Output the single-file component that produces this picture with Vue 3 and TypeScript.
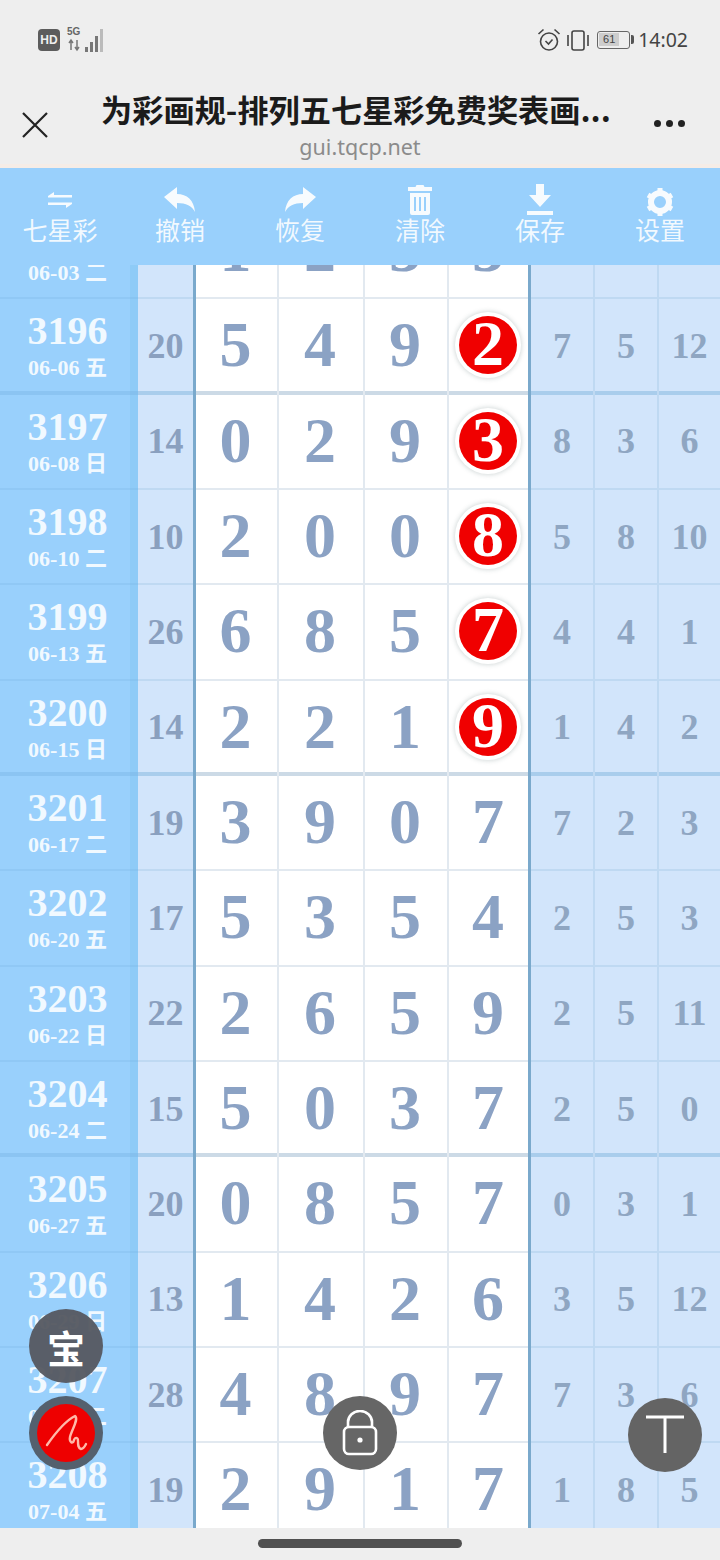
<template>
  <div class="screen">
    <div class="status">
      <div class="status__left">
        <span class="hd">HD</span>
        <div class="net">
          <span class="net__g">5G</span>
          <svg width="40" height="24" viewBox="0 0 40 24">
            <path d="M5 12v10M3 15l2-3 2 3M11 22V12M9 19l2 3 2-3" fill="none" stroke="#777" stroke-width="1.5" />
            <rect x="19" y="19" width="3" height="5" fill="#777" />
            <rect x="24" y="14" width="3" height="10" fill="#777" />
            <rect x="29" y="8" width="3" height="16" fill="#777" />
            <rect x="34" y="1" width="3" height="23" fill="#bbb" />
          </svg>
        </div>
      </div>
      <div class="status__right">
        <svg width="24" height="24" viewBox="0 0 24 24" fill="none" stroke="#444" stroke-width="1.6">
          <circle cx="12" cy="13.5" r="8.5" />
          <path d="M8.5 13l3 3 4-4.5M1.5 6l5-4.5M22.5 6l-5-4.5" />
        </svg>
        <svg width="26" height="24" viewBox="0 0 26 24" fill="none" stroke="#444" stroke-width="1.6">
          <rect x="7" y="3" width="12" height="19" rx="2" />
          <path d="M3 7v11M23 7v11" />
        </svg>
        <div class="batt"><span class="batt__fill">61</span></div>
        <span class="time">14:02</span>
      </div>
    </div>

    <header class="head">
      <svg class="head__close" width="28" height="28" viewBox="0 0 28 28">
        <path d="M2 2l24 24M26 2L2 26" stroke="#222" stroke-width="2.2" fill="none" />
      </svg>
      <div class="head__mid">
        <div class="head__title">为彩画规-排列五七星彩免费奖表画...</div>
        <div class="head__url">gui.tqcp.net</div>
      </div>
      <div class="head__more"><i></i><i></i><i></i></div>
    </header>

    <nav class="tools">
      <div class="tool">
        <svg viewBox="0 0 32 32" width="32" height="32" fill="#fff">
          <path d="M4 12l6-4v3h18v2.4H4zM28 20l-6 4v-3H4v-2.4h24z" />
        </svg>
        <span>七星彩</span>
      </div>
      <div class="tool">
        <svg viewBox="0 0 32 32" width="32" height="32" fill="#fff">
          <path d="M0 13L13 3v7c10 0 17 6 18 18-3-6-9-9-18-9v6z" />
        </svg>
        <span>撤销</span>
      </div>
      <div class="tool">
        <svg viewBox="0 0 32 32" width="32" height="32" fill="#fff">
          <path d="M32 13L19 3v7C9 10 2 16 1 28c3-6 9-9 18-9v6z" />
        </svg>
        <span>恢复</span>
      </div>
      <div class="tool">
        <svg viewBox="0 0 32 32" width="32" height="32" fill="#fff">
          <path fill-rule="evenodd" d="M12.5 1h7l1 2H28v4H4V3h7.5zM6 9h20v20a2 2 0 0 1-2 2H8a2 2 0 0 1-2-2zm4 4v14h2V13zm5 0v14h2V13zm5 0v14h2V13z" />
        </svg>
        <span>清除</span>
      </div>
      <div class="tool">
        <svg viewBox="0 0 32 32" width="32" height="32" fill="#fff">
          <path d="M12 0h8v11h7L16 23 5 11h7zM3 27h26v4H3z" />
        </svg>
        <span>保存</span>
      </div>
      <div class="tool">
        <svg viewBox="0 0 32 32" width="32" height="32">
          <circle cx="16" cy="18" r="9" fill="none" stroke="#fff" stroke-width="6" />
          <path d="M16 18v-14M16 18v14M16 18l12-7M16 18L4 25M16 18l12 7M16 18L4 11" stroke="#fff" stroke-width="5" stroke-dasharray="0 10 5" fill="none" />
        </svg>
        <span>设置</span>
      </div>
    </nav>

    <main class="table">
      <div class="rows">
        <div v-for="(r, i) in rows" :key="i" :class="['row', i % 4 === 1 && 'row--thick']">
          <div class="c-no">
            <div class="c-no__num">{{ r.no }}</div>
            <div class="c-no__date">{{ r.date }}</div>
          </div>
          <div class="c-sum">{{ r.sum }}</div>
          <div class="c-main">
            <div v-for="(d, j) in r.main" :key="j" class="cell">
              <span v-if="j === 3 && r.hit" class="ball">{{ d }}</span>
              <template v-else>{{ d }}</template>
            </div>
          </div>
          <div class="c-side">
            <div v-for="(d, j) in r.side" :key="j" class="cell">{{ d }}</div>
          </div>
        </div>
      </div>
    </main>

    <div class="home"><i></i></div>

    <div class="fab fab--bao">宝</div>
    <div class="fab fab--sign">
      <div class="sign">
        <svg width="58" height="58" viewBox="0 0 58 58" fill="none">
          <path d="M10 41C17 31 28 17 38 12c4 3-3 13-5 21-1 5 3 8 4 3 1-3 4-3 4 1 0 4 0 7 3 8 2 0 4-3 5-5" stroke="#ffb8a8" stroke-width="2.4" stroke-linecap="round" stroke-linejoin="round" />
        </svg>
      </div>
    </div>
    <div class="fab fab--lock">
      <svg width="38" height="46" viewBox="0 0 38 46" fill="none" stroke="#fff" stroke-width="2.6">
        <path d="M7 17v-5a12 11 0 0 1 24 0v5" />
        <rect x="3" y="17" width="32" height="27" rx="5" />
        <circle cx="19" cy="30" r="2.6" fill="#fff" stroke="none" />
      </svg>
    </div>
    <div class="fab fab--top">
      <svg width="42" height="42" viewBox="0 0 42 42" fill="none" stroke="#fff" stroke-width="3">
        <path d="M2 3h38M21 3v36" />
      </svg>
    </div>
  </div>
</template>

<script setup lang="ts">
interface Row {
  no: string;
  date: string;
  sum: string;
  main: string[];
  side: string[];
  hit?: boolean;
}

// the first row sits mostly under the toolbar, only its lower edge shows
const row = (no: string, date: string, sum: string, main: string, side: string[], hit = false): Row => ({
  no,
  date,
  sum,
  main: main.split(""),
  side,
  hit,
});

const rows: Row[] = [
  row("", "06-03 二", "", "1233", ["", "", ""]),
  row("3196", "06-06 五", "20", "5492", ["7", "5", "12"], true),
  row("3197", "06-08 日", "14", "0293", ["8", "3", "6"], true),
  row("3198", "06-10 二", "10", "2008", ["5", "8", "10"], true),
  row("3199", "06-13 五", "26", "6857", ["4", "4", "1"], true),
  row("3200", "06-15 日", "14", "2219", ["1", "4", "2"], true),
  row("3201", "06-17 二", "19", "3907", ["7", "2", "3"]),
  row("3202", "06-20 五", "17", "5354", ["2", "5", "3"]),
  row("3203", "06-22 日", "22", "2659", ["2", "5", "11"]),
  row("3204", "06-24 二", "15", "5037", ["2", "5", "0"]),
  row("3205", "06-27 五", "20", "0857", ["0", "3", "1"]),
  row("3206", "06-29 日", "13", "1426", ["3", "5", "12"]),
  row("3207", "07-01 二", "28", "4897", ["7", "3", "6"]),
  row("3208", "07-04 五", "19", "2917", ["1", "8", "5"]),
];
</script>

<style>
body {
  background: #eeeeee;
}
</style>

<style scoped>
.screen {
  position: relative;
  width: 720px;
  height: 1560px;
  display: flex;
  flex-direction: column;
  overflow: hidden;
  background: #eeeeee;
  font-family: "Noto Sans CJK SC", "Noto Sans", sans-serif;
}

.status {
  height: 80px;
  flex-shrink: 0;
  padding: 0 32px 0 38px;
  display: flex;
  align-items: center;
  justify-content: space-between;
}

.status__left,
.status__right {
  display: flex;
  align-items: center;
}

.hd {
  width: 22px;
  height: 22px;
  border-radius: 4px;
  background: #5c5c5c;
  color: #eee;
  font: 700 12px/22px "Liberation Sans", sans-serif;
  text-align: center;
}

.net {
  position: relative;
  width: 40px;
  height: 26px;
  margin-left: 6px;
}

.net svg {
  position: absolute;
  left: 0;
  top: 1px;
}

.net__g {
  position: absolute;
  left: 1px;
  top: 0;
  font: 700 10px/10px "Liberation Sans", sans-serif;
  color: #666;
}

.status__right {
  gap: 4px;
}

.batt {
  position: relative;
  width: 33px;
  height: 18px;
  margin-left: 2px;
  border: 1.5px solid #666;
  border-radius: 3px;
  padding: 1px;
  box-sizing: border-box;
}

.batt::after {
  content: "";
  position: absolute;
  right: -5px;
  top: 3px;
  width: 3px;
  height: 9px;
  background: #555;
  border-radius: 0 2px 2px 0;
}

.batt__fill {
  display: block;
  width: 20px;
  height: 13px;
  background: #cdcdcd;
  color: #444;
  font: 11px/13px "Liberation Sans", sans-serif;
  text-align: center;
}

.time {
  margin-left: 4px;
  font: 19.5px/24px "Noto Sans", sans-serif;
  color: #444;
}

.head {
  position: relative;
  flex-shrink: 0;
  border-bottom: 4px solid #f5ece6;
  height: 84px;
  display: flex;
  justify-content: center;
}

.head__close {
  position: absolute;
  left: 21px;
  top: 31px;
}

.head__mid {
  margin-left: -8px;
  text-align: center;
}

.head__title {
  font-size: 31.2px;
  font-weight: 700;
  line-height: 44px;
  margin-top: 7px;
  color: #1b1b1b;
  white-space: nowrap;
}

.head__url {
  font: 21.5px/28px "Noto Sans", sans-serif;
  color: #8b8b8b;
  margin-top: 2px;
  padding-left: 8px;
}

.head__more {
  position: absolute;
  left: 654px;
  top: 40px;
  display: flex;
  gap: 5px;
}

.head__more i {
  width: 7px;
  height: 7px;
  border-radius: 50%;
  background: #222;
}

.tools {
  height: 97px;
  flex-shrink: 0;
  display: grid;
  grid-template-columns: repeat(6, 120px);
  background: #99d0fc;
}

.tool {
  display: flex;
  flex-direction: column;
  align-items: center;
  padding-top: 16px;
  color: rgba(255, 255, 255, 0.88);
  font-size: 25px;
  line-height: 24px;
}

.tool svg {
  opacity: 0.92;
  margin-bottom: 1px;
}

.table {
  flex: 1;
  min-height: 0;
  overflow: hidden;
  background: #fff;
  font-family: "Liberation Serif", "Noto Sans CJK SC", serif;
  font-weight: 700;
}

.rows {
  margin-top: -61px;
}

.row {
  height: 95.33px;
  display: flex;
  box-sizing: border-box;
  box-shadow: inset 0 -2px 0 #e2e9f0;
}

.row--thick {
  box-shadow: inset 0 -4px 0 #ccdae6;
}

.c-no {
  width: 138px;
  flex-shrink: 0;
  box-sizing: border-box;
  background: linear-gradient(to right, #99d0fc 130px, #8ecbf7 130px);
  box-shadow: inset 0 -2px 0 rgba(110, 170, 220, 0.2);
  color: #f1f9ff;
  text-align: center;
  padding: 10px 3px 0 0;
}

.c-no__num {
  font-size: 40px;
  line-height: 44px;
  min-height: 44px;
}

.c-no__date {
  font-size: 22px;
  line-height: 28px;
  margin-top: 1px;
  white-space: nowrap;
}

.c-sum {
  width: 58px;
  flex-shrink: 0;
  box-sizing: border-box;
  border-right: 3px solid #7aa9cc;
  padding-bottom: 2px;
  background: #d2e5fb;
  box-shadow: inset 0 -2px 0 #bfd9f2;
  color: #8aa0bf;
  font-size: 36px;
  display: flex;
  align-items: center;
  justify-content: center;
}

.c-main {
  display: grid;
  grid-template-columns: 81px 86px 84px 81px;
  width: 332px;
  flex-shrink: 0;
  color: #8ba2c4;
  font-size: 64px;
}

.c-main .cell {
  padding-bottom: 3px;
}

.c-main .cell:first-child {
  padding-right: 2px;
}

.c-main .cell:last-child {
  padding-left: 1px;
}

.c-main .cell + .cell {
  box-shadow: inset 2px 0 0 #e2e9f0;
}

.cell {
  display: flex;
  align-items: center;
  justify-content: center;
  box-sizing: border-box;
}

.ball {
  width: 58px;
  height: 58px;
  border-radius: 50%;
  background: #f00000;
  color: #fff;
  line-height: 56px;
  text-align: center;
  box-shadow:
    0 0 0 4px #fff,
    0 0 4px 5px rgba(120, 140, 140, 0.3);
}

.c-side {
  flex: 1;
  display: grid;
  grid-template-columns: 64px 64px 61px;
  border-left: 3px solid #7aa9cc;
  background: #d2e5fb;
  box-shadow: inset 0 -2px 0 #bfd9f2;
  color: #8fa6c2;
  font-size: 36px;
}

.c-side .cell {
  padding-bottom: 2px;
  border-right: 2px solid #bfd9f2;
}

.c-side .cell:last-child {
  border-right: 0;
}

.row--thick .c-side,
.row--thick .c-sum {
  box-shadow: inset 0 -4px 0 #a9cdec;
}

.row--thick .c-no {
  box-shadow: inset 0 -4px 0 rgba(110, 170, 220, 0.3);
}

.home {
  height: 32px;
  flex-shrink: 0;
  background: #eeeeee;
  display: flex;
  justify-content: center;
  padding-top: 11px;
  box-sizing: border-box;
}

.home i {
  width: 204px;
  height: 9px;
  border-radius: 5px;
  background: #505050;
}

.fab {
  position: absolute;
  width: 74px;
  height: 74px;
  border-radius: 50%;
  background: #5f6062;
  display: flex;
  align-items: center;
  justify-content: center;
}

.fab--bao {
  left: 29px;
  top: 1309px;
  color: #fff;
  font-size: 38px;
  font-weight: 700;
  background: rgba(86, 90, 98, 0.96);
}

.fab--sign {
  left: 29px;
  top: 1396px;
  background: #54606e;
}

.sign {
  width: 58px;
  height: 58px;
  border-radius: 50%;
  background: #ee0000;
}

.fab--lock {
  left: 323px;
  top: 1396px;
  background: #666666;
}

.fab--top {
  left: 628px;
  top: 1398px;
  background: #646464;
}
</style>
